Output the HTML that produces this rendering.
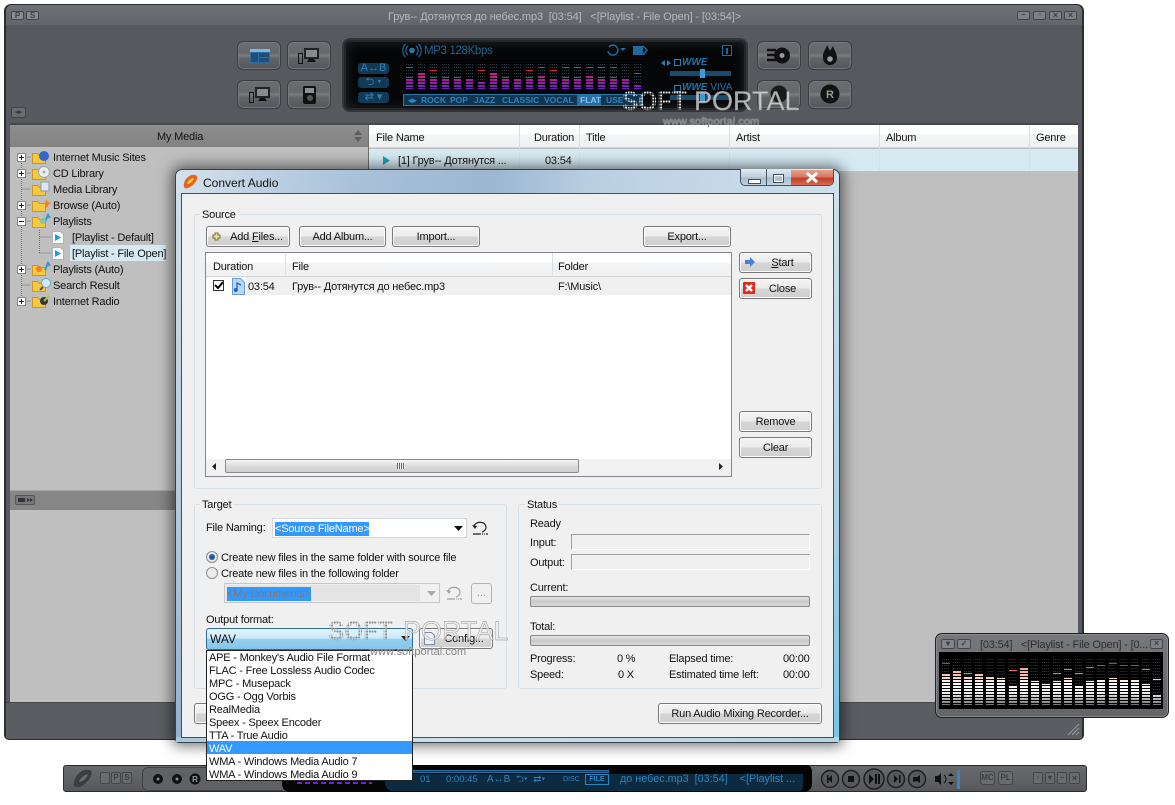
<!DOCTYPE html>
<html><head><meta charset="utf-8"><style>
html,body{margin:0;padding:0;background:#fff}
#r{position:relative;width:1175px;height:805px;overflow:hidden;background:#fff;font-family:"Liberation Sans",sans-serif;font-size:11px;color:#111}
#r div,#r svg{position:absolute}
.t{position:absolute;white-space:pre;line-height:14px;font-size:11px;letter-spacing:-.19px;margin-top:1px}
.n{margin-top:0;letter-spacing:0}
.b{position:absolute;box-sizing:border-box;border:1px solid #7a7a7a;border-radius:3px;background:linear-gradient(#f4f4f4 0,#ececec 48%,#d6d6d6 52%,#cfcfcf 100%);box-shadow:inset 0 0 0 1px #fbfbfb;text-align:center;line-height:20px;font-size:11px;letter-spacing:-.19px;white-space:pre}
.g{position:absolute;box-sizing:border-box;border:1px solid #d5dfe5;border-radius:3px}
.mb{position:absolute;box-sizing:border-box;border:1px solid #3c3d41;border-radius:6px;background:linear-gradient(#6c6d71 0,#67686c 40%,#7a7b7f 50%,#636468 60%,#55565a 100%);box-shadow:inset 0 0 0 1px #76777b}
.sm{position:absolute;box-sizing:border-box;border:1px solid #45464a;background:#808186;border-radius:2px;color:#3d3e42;font:bold 8px/8px "Liberation Sans",sans-serif;text-align:center}
.chip{position:absolute;background:#123a55;border-radius:3px;color:#2f7fb4;font-size:11px;line-height:11px;text-align:center}
.soft{position:absolute;font:bold 27px/32px "Liberation Sans",sans-serif;color:transparent;background-image:radial-gradient(circle,#e6e6e6 1px,transparent 1.300px);background-size:3px 3px;-webkit-background-clip:text;background-clip:text;transform:scaleX(.9);transform-origin:0 0}
.port{position:absolute;font:27px/32px "Liberation Sans",sans-serif;color:rgba(235,235,235,.72);-webkit-text-stroke:.4px #8a8a8a}
.url{position:absolute;font:11px/14px "Liberation Sans",sans-serif;color:rgba(115,115,115,.9);text-shadow:0 0 1px #fff;white-space:pre;letter-spacing:.05px}
.ps{left:0;color:#2f83bc;font:bold 8.500px/14px "Liberation Sans",sans-serif}
</style></head><body><div id="r">

<!-- MAIN WINDOW -->
<div style="left:4px;top:4px;width:1080px;height:736px;background:#58595e;border:1px solid #2d2e31;border-left-width:2px;border-right-width:2px;box-sizing:border-box;border-radius:7px 7px 5px 5px"></div>
<div style="left:6px;top:5px;width:1076px;height:20px;background:linear-gradient(#6f7176,#63656a);border-radius:6px 6px 0 0"></div>
<div class="sm" style="left:11px;top:11px;width:13px;height:9px;background:#8b8c90">P</div>
<div class="sm" style="left:26px;top:11px;width:13px;height:9px;background:#8b8c90">S</div>
<div class="t" style="left:388px;top:9px;color:#b6b8bc;letter-spacing:-.12px">Грув-- Дотянутся до небес.mp3  [03:54]   &lt;[Playlist - File Open] - [03:54]&gt;</div>
<div class="sm" style="left:1017px;top:11px;width:13px;height:9px;line-height:6px">–</div>
<div class="sm" style="left:1033px;top:11px;width:13px;height:9px;line-height:6px">▫</div>
<div class="sm" style="left:1049px;top:11px;width:13px;height:9px;font-size:9px;line-height:7px">×</div>
<div class="sm" style="left:1064px;top:11px;width:13px;height:9px;font-size:9px;line-height:7px">×</div>
<div class="sm" style="left:11px;top:107px;width:15px;height:11px;background:#6b6c70;font-size:7px;line-height:9px">◂▸</div>

<!-- main buttons -->
<div class="mb" style="left:237px;top:41px;width:44px;height:29px"></div>
<svg style="left:250px;top:49px" width="20" height="14"><rect width="20" height="14" fill="#2f6c9e"/><rect width="20" height="3" fill="#7fb6dd"/><rect x="1" y="4" width="7" height="9" fill="#1e4f78"/><rect x="9" y="4" width="10" height="4" fill="#1e4f78"/><rect x="9" y="9" width="10" height="4" fill="#1e4f78"/></svg>
<div class="mb" style="left:287px;top:41px;width:44px;height:29px"></div>
<svg style="left:298px;top:47px" width="22" height="17"><rect x="0.5" y="6.5" width="4" height="10" fill="none" stroke="#111"/><rect x="6" y="1" width="15" height="11" fill="#222"/><rect x="8" y="3" width="11" height="7" fill="#8a8b8f"/><path d="M11 12h5l2 3H9z" fill="#111"/></svg>
<div class="mb" style="left:237px;top:80px;width:44px;height:29px"></div>
<svg style="left:249px;top:86px" width="22" height="17"><rect x="0.5" y="6.5" width="4" height="10" fill="none" stroke="#111"/><rect x="6" y="1" width="15" height="11" fill="#222"/><rect x="8" y="3" width="11" height="7" fill="#8a8b8f"/><path d="M11 12h5l2 3H9z" fill="#111"/></svg>
<div class="mb" style="left:287px;top:80px;width:44px;height:29px"></div>
<svg style="left:303px;top:86px" width="13" height="18"><rect width="13" height="18" rx="2" fill="#111"/><rect x="2" y="2" width="9" height="5" fill="#8d8e92"/><circle cx="7" cy="12" r="3" fill="#555"/></svg>
<div class="mb" style="left:757px;top:41px;width:44px;height:29px"></div>
<svg style="left:767px;top:47px" width="24" height="17"><circle cx="15" cy="8.500" r="8" fill="#111"/><circle cx="15" cy="8.500" r="2.500" fill="#999"/><path d="M0 3h9M0 8h7M0 13h9" stroke="#111" stroke-width="2.500"/></svg>
<div class="mb" style="left:808px;top:41px;width:44px;height:29px"></div>
<svg style="left:821px;top:44px" width="18" height="23"><path d="M2 14C1 8 5 6 6 1c1 2 2 4 3 6 1-2 2-3 3-5 1 4 4 7 4 12a7 7 0 0 1-14 0z" fill="#111"/><circle cx="9" cy="15" r="2.800" fill="#999"/></svg>
<div class="mb" style="left:757px;top:80px;width:44px;height:29px"></div>
<svg style="left:769px;top:84px" width="20" height="20"><circle cx="10" cy="10" r="8.500" fill="#1a1a1a"/></svg>
<div class="mb" style="left:808px;top:80px;width:44px;height:29px"></div>
<svg style="left:820px;top:84px" width="20" height="20"><circle cx="10" cy="10" r="9.500" fill="#111"/><text x="10" y="14" text-anchor="middle" font-family="Liberation Sans" font-weight="bold" font-size="11" fill="#999">R</text></svg>

<!-- display -->
<div style="left:342px;top:38px;width:406px;height:74px;background:#050607;border:2px solid #333539;box-sizing:border-box;border-radius:8px;box-shadow:inset 0 0 0 2px #24262a,inset 0 0 10px 4px #1c1e22"></div>
<svg style="left:402px;top:43px" width="20" height="15"><circle cx="10" cy="7.500" r="2.800" fill="#2a76aa"/><path d="M6 3a6 6 0 0 0 0 9M14 3a6 6 0 0 1 0 9M3.500 1a9 9 0 0 0 0 13M16.500 1a9 9 0 0 1 0 13" stroke="#1f5f8c" stroke-width="1.300" fill="none"/></svg>
<div class="t n" style="left:424px;top:44px;color:#1f6491;font-size:11.500px;letter-spacing:-.35px">MP3 128Kbps</div>
<div class="chip" style="left:358px;top:63px;width:31px;height:11px">A↔B</div>
<div class="chip" style="left:358px;top:77px;width:31px;height:11px">⮌ ▾</div>
<div class="chip" style="left:358px;top:92px;width:31px;height:11px">⇄ ▾</div>

<svg style="left:404px;top:60px" width="240" height="32">
<defs>
<pattern id="d1" width="12" height="3" patternUnits="userSpaceOnUse"><rect x="2" width="1" height="2" fill="#30404a"/><rect x="4" width="1" height="2" fill="#30404a"/><rect x="6" width="1" height="2" fill="#30404a"/><rect x="8" width="1" height="2" fill="#30404a"/></pattern>
<pattern id="s1" width="3" height="3" patternUnits="userSpaceOnUse" patternTransform="translate(0 1)"><rect width="3" height="2" fill="none"/><rect y="2" width="3" height="1" fill="#000"/></pattern>
<linearGradient id="m1" x1="0" y1="12" x2="0" y2="29" gradientUnits="userSpaceOnUse"><stop offset="0" stop-color="#d0207a"/><stop offset=".5" stop-color="#a020a0"/><stop offset="1" stop-color="#6a20c0"/></linearGradient>
</defs>
<rect x="0" y="3" width="240" height="26" fill="url(#d1)"/>
<g fill="url(#m1)">
<rect x="2" y="17" width="7" height="12"/><rect x="14" y="13" width="7" height="16"/><rect x="26" y="17" width="7" height="12"/><rect x="38" y="17" width="7" height="12"/><rect x="50" y="17" width="7" height="12"/><rect x="62" y="19" width="7" height="10"/><rect x="74" y="21" width="7" height="8"/><rect x="86" y="13" width="7" height="16"/><rect x="98" y="17" width="7" height="12"/><rect x="110" y="19" width="7" height="10"/><rect x="122" y="17" width="7" height="12"/><rect x="134" y="16" width="7" height="13"/><rect x="146" y="19" width="7" height="10"/><rect x="158" y="17" width="7" height="12"/><rect x="170" y="17" width="7" height="12"/><rect x="182" y="16" width="7" height="13"/><rect x="194" y="17" width="7" height="12"/><rect x="206" y="17" width="7" height="12"/><rect x="218" y="19" width="7" height="10"/><rect x="230" y="25" width="7" height="4"/>
</g>
<rect width="240" height="32" fill="url(#s1)"/>
<g fill="#d8263c">
<rect x="2" y="7" width="7" height="1"/><rect x="26" y="10" width="7" height="1"/><rect x="74" y="10" width="7" height="1"/><rect x="122" y="10" width="7" height="1"/><rect x="134" y="7" width="7" height="1"/><rect x="146" y="10" width="7" height="1"/><rect x="158" y="7" width="7" height="1"/><rect x="170" y="7" width="7" height="1"/><rect x="182" y="7" width="7" height="1"/><rect x="206" y="7" width="7" height="1"/><rect x="230" y="13" width="7" height="1"/><rect x="194" y="7" width="7" height="1"/>
</g>
</svg>

<div style="left:403px;top:94px;width:240px;height:12px;box-sizing:border-box;border:1px solid #2a79ab;background:#0f3550"></div>
<div class="t n ps" style="left:408px;top:93px">◂▸</div>
<div class="t n ps" style="left:421px;top:93px">ROCK</div>
<div class="t n ps" style="left:450px;top:93px">POP</div>
<div class="t n ps" style="left:474px;top:93px">JAZZ</div>
<div class="t n ps" style="left:502px;top:93px">CLASSIC</div>
<div class="t n ps" style="left:544px;top:93px">VOCAL</div>
<div style="left:577px;top:95px;width:24px;height:10px;background:#2a6f9f"></div>
<div class="t n ps" style="left:580px;top:93px;color:#7fc3ee">FLAT</div>
<div class="t n ps" style="left:606px;top:93px">USE</div>

<svg style="left:605px;top:43px" width="130" height="60" fill="none">
<path d="M4 4a5 5 0 1 1-1 4" stroke="#1f6a9c" stroke-width="1.500"/><path d="M15 5h6l-3 3z" fill="#1f6a9c"/>
<rect x="28" y="3" width="10" height="9" fill="#1f6a9c"/><path d="M38 3l4 4-4 5" stroke="#1f6a9c" stroke-width="1.500"/>
<rect x="117.500" y="2.500" width="9" height="10" stroke="#1f6a9c"/><rect x="121" y="5" width="2" height="6" fill="#1f6a9c"/>
<path d="M60 17l-4 3 4 3zM62 17l4 3-4 3z" fill="#2a7db5"/><rect x="69.500" y="16.500" width="6" height="6" stroke="#2a7db5"/>
<rect x="65" y="28" width="61" height="5" fill="#1a4a6c"/><rect x="95" y="26" width="5" height="9" fill="#3f9ad6"/>
<rect x="69.500" y="42.500" width="6" height="6" stroke="#2a7db5"/>
<rect x="65" y="52" width="61" height="5" fill="#1a4a6c"/><rect x="95" y="50" width="5" height="9" fill="#3f9ad6"/>
</svg>
<div class="t n" style="left:682px;top:56px;color:#2272a8;font:italic bold 10px/14px 'Liberation Sans',sans-serif">WWE</div>
<div class="t n" style="left:682px;top:81px;color:#2272a8;font:italic bold 10px/14px 'Liberation Sans',sans-serif">WWE<span style="font-weight:normal;font-style:normal"> VIVA</span></div>

<!-- left pane -->
<div style="left:10px;top:123px;width:1068px;height:2px;background:#46474a"></div>
<div style="left:10px;top:125px;width:358px;height:22px;background:linear-gradient(#8e8e8e,#828282)"></div>
<div class="t" style="left:157px;top:129px;color:#141414">My Media</div>
<svg style="left:353px;top:129px" width="10" height="14"><path d="M5 1l4 5H1zM5 13l4-5H1z" fill="#5d5d5d"/></svg>
<div style="left:10px;top:147px;width:358px;height:343px;background:#bfbfbf"></div>
<div style="left:10px;top:490px;width:358px;height:20px;background:#868686;border-top:1px solid #a8a8a8;box-sizing:border-box"></div>
<svg style="left:15px;top:495px" width="20" height="10"><rect x=".5" y=".5" width="19" height="9" rx="1" fill="#77787c" stroke="#555"/><rect x="3" y="3" width="7" height="4" fill="#333"/><path d="M12 3l3 2-3 2zM15 3l3 2-3 2z" fill="#333"/></svg>
<div style="left:10px;top:510px;width:358px;height:192px;background:#bfbfbf"></div>
<div style="left:368px;top:125px;width:1px;height:577px;background:#6f6f6f"></div>

<!-- tree -->
<svg style="left:14px;top:150px" width="60" height="160" fill="none">
<path d="M7.500 7V151M7.500 7h10M7.500 23h10M7.500 39h10M7.500 55h10M7.500 71h10M7.500 119h10M7.500 135h10M7.500 151h10M25.500 80V103M25.500 87h12M25.500 103h12" stroke="#6f6f6f" stroke-dasharray="1 1"/>
<g fill="#fff" stroke="#7a8a9c"><rect x="3.500" y="3.500" width="8" height="8"/><rect x="3.500" y="19.500" width="8" height="8"/><rect x="3.500" y="51.500" width="8" height="8"/><rect x="3.500" y="67.500" width="8" height="8"/><rect x="3.500" y="115.500" width="8" height="8"/><rect x="3.500" y="147.500" width="8" height="8"/></g>
<path d="M5 7.500h5M7.500 5v5M5 23.500h5M7.500 21v5M5 55.500h5M7.500 53v5M5 71.500h5M5 119.500h5M7.500 117v5M5 151.500h5M7.500 149v5" stroke="#223"/>
<g fill="#f5c93e" stroke="#c8962a"><path d="M18.500 3.500h5l2 2h6v8h-13z"/><path d="M18.500 19.500h5l2 2h6v8h-13z"/><path d="M18.500 35.500h5l2 2h6v8h-13z"/><path d="M18.500 51.500h5l2 2h6v8h-13z"/><path d="M18.500 67.500h5l2 2h6v8h-13z"/><path d="M18.500 115.500h5l2 2h6v8h-13z"/><path d="M18.500 131.500h5l2 2h6v8h-13z"/><path d="M18.500 147.500h5l2 2h6v8h-13z"/></g>
<circle cx="30" cy="6" r="5" fill="#2f68c8"/><circle cx="30" cy="22" r="5.500" fill="#e8eef4" stroke="#9aa"/><circle cx="30" cy="22" r="1.500" fill="#aab"/>
<rect x="27" y="32" width="8" height="9" fill="#dbe4ef" stroke="#8a9ab0"/><path d="M32 49l2 3 3 1-3 2-1 3-2-3z" fill="#f08020"/>
<path d="M31 72l3-7 2 3" stroke="#2a9ad8" stroke-width="2"/><circle cx="29" cy="71" r="3" fill="#8ac0a0"/><path d="M31 120l3-7 2 3" stroke="#2a9ad8" stroke-width="2"/><circle cx="25" cy="119" r="3" fill="#f08020"/>
<circle cx="32" cy="133" r="4.500" fill="#cfe8f5" stroke="#6ab"/><path d="M29 137l-3 3" stroke="#555" stroke-width="2"/>
<circle cx="30" cy="151" r="4" fill="#334"/><path d="M30 151l5-5" stroke="#b4c020" stroke-width="2"/>
<g><path d="M38.500 81.500h8l3 3v9h-11z" fill="#fff" stroke="#9fb5cf"/><path d="M41 84l6 3.500-6 3.500z" fill="#1c9be0"/><path d="M38.500 97.500h8l3 3v9h-11z" fill="#fff" stroke="#9fb5cf"/><path d="M41 100l6 3.500-6 3.500z" fill="#1c9be0"/></g>
</svg>
<div style="left:70px;top:245px;width:96px;height:16px;background:#d6eaf3"></div>
<div class="t" style="left:53px;top:150px">Internet Music Sites</div>
<div class="t" style="left:53px;top:166px">CD Library</div>
<div class="t" style="left:53px;top:182px">Media Library</div>
<div class="t" style="left:53px;top:198px">Browse (Auto)</div>
<div class="t" style="left:53px;top:214px">Playlists</div>
<div class="t" style="left:72px;top:230px">[Playlist - Default]</div>
<div class="t" style="left:72px;top:246px">[Playlist - File Open]</div>
<div class="t" style="left:53px;top:262px">Playlists (Auto)</div>
<div class="t" style="left:53px;top:278px">Search Result</div>
<div class="t" style="left:53px;top:294px">Internet Radio</div>

<!-- right pane -->
<div style="left:369px;top:125px;width:709px;height:577px;background:#bfbfbf"></div>
<div style="left:369px;top:125px;width:709px;height:23px;background:linear-gradient(#fff 0,#fff 40%,#f2f4f5 45%,#eff1f2 100%);border-bottom:1px solid #d5d5d5;box-sizing:border-box"></div>
<div style="left:369px;top:149px;width:709px;height:22px;background:#d6eaf3"></div>
<div style="left:519px;top:125px;width:1px;height:46px;background:#dcdfe1"></div><div style="left:579px;top:125px;width:1px;height:46px;background:#dcdfe1"></div><div style="left:729px;top:125px;width:1px;height:46px;background:#dcdfe1"></div><div style="left:879px;top:125px;width:1px;height:46px;background:#dcdfe1"></div><div style="left:1029px;top:125px;width:1px;height:46px;background:#dcdfe1"></div>
<div class="t" style="left:376px;top:130px">File Name</div><div class="t" style="left:534px;top:130px">Duration</div><div class="t" style="left:586px;top:130px">Title</div><div class="t" style="left:736px;top:130px">Artist</div><div class="t" style="left:886px;top:130px">Album</div><div class="t" style="left:1036px;top:130px">Genre</div>
<svg style="left:382px;top:155px" width="9" height="11"><path d="M1 1l7 4.500-7 4.500z" fill="#26a0b8"/></svg>
<div class="t" style="left:398px;top:153px">[1] Грув-- Дотянутся ...</div>
<div class="t" style="left:545px;top:153px">03:54</div>

<div style="left:6px;top:702px;width:1076px;height:36px;background:#5c5d62;border-top:1px solid #48494c;box-sizing:border-box"></div>
<svg style="left:1066px;top:722px" width="14" height="14"><path d="M13 2L2 13M13 6l-7 7M13 10l-3 3" stroke="#9a9a9a"/></svg>

<!-- DIALOG -->
<div style="left:175px;top:169px;width:665px;height:574px;border-radius:7px 7px 4px 4px;box-sizing:border-box;border:1px solid #34424e;box-shadow:0 0 14px 3px rgba(0,0,0,.55);background:linear-gradient(100deg,#d5e2ec 0,#bcd0e2 12%,#a8c0d8 25%,#9cb7d2 42%,#bad0e2 55%,#cadcea 80%,#d9e8f1 100%)"></div>
<div style="left:176px;top:193px;width:5px;height:548px;background:linear-gradient(#cfdeea,#b6cbdc 55%,#8fb2cf 100%)"></div>
<div style="left:833px;top:193px;width:6px;height:548px;background:linear-gradient(#cde1ee,#a9cfe6 60%,#76c5e6 100%)"></div>
<div style="left:176px;top:737px;width:663px;height:5px;background:linear-gradient(90deg,#a8c8dc,#cfdfe9 40%,#b6d4e4 100%)"></div>
<div style="left:181px;top:193px;width:653px;height:545px;background:#f0f0f0;border:1px solid #3f5060;box-sizing:border-box"></div>
<svg style="left:182px;top:173px" width="17" height="17"><path d="M2 14C1 9 5 3 10 2c4-1 6 1 5 4-1 4-6 8-9 9-2 .5-3.500.5-4-1z" fill="#e8631c"/><path d="M5 11c1-3 4-6 7-6-1 3-4 6-7 6z" fill="#ffd04a"/></svg>
<div class="t n" style="left:203px;top:176px;font-size:12px;color:#111">Convert Audio</div>
<div style="left:740px;top:169px;width:94px;height:17px;box-sizing:border-box;border:1px solid #46535f;border-top:none;border-radius:0 0 5px 5px;overflow:hidden;background:linear-gradient(#e2ebf2,#bfcfdc 50%,#a8bccb 55%,#c4d4df)"></div>
<div style="left:766px;top:169px;width:1px;height:16px;background:#4d5a66"></div>
<div style="left:791px;top:170px;width:42px;height:15px;background:linear-gradient(#e6a08e,#d87a66 45%,#c43e26 55%,#d46a52);border-radius:0 0 4px 0"></div>
<div style="left:748px;top:179px;width:11px;height:3px;background:#fff;border:1px solid #44505c"></div>
<div style="left:773px;top:174px;width:9px;height:7px;border:1px solid #44505c;box-shadow:inset 0 0 0 1px #fff"></div>
<svg style="left:805px;top:171px" width="14" height="13"><path d="M2 2l10 9M12 2L2 11" stroke="#fff" stroke-width="3"/></svg>

<!-- source group -->
<div class="g" style="left:194px;top:214px;width:628px;height:275px"></div>
<div class="t" style="left:200px;top:207px;background:#f0f0f0;padding:0 2px">Source</div>
<div class="b" style="left:206px;top:226px;width:84px;height:21px;padding-left:17px">Add <u>F</u>iles...</div>
<svg style="left:212px;top:232px" width="9" height="9"><path d="M3 1h3v2h2v3H6v2H3V6H1V3h2z" fill="#e9e2a0" stroke="#7a7030"/></svg>
<div class="b" style="left:299px;top:226px;width:87px;height:21px">Add Album...</div>
<div class="b" style="left:392px;top:226px;width:88px;height:21px">Import...</div>
<div class="b" style="left:643px;top:226px;width:88px;height:21px">Export...</div>
<div class="b" style="left:739px;top:252px;width:73px;height:21px;padding-left:14px"><u>S</u>tart</div>
<svg style="left:744px;top:257px" width="12" height="10"><path d="M1 3h5V0l5 5-5 5V7H1z" fill="#4c7fd8"/></svg>
<div class="b" style="left:739px;top:278px;width:73px;height:21px;padding-left:14px">Close</div>
<svg style="left:743px;top:282px" width="12" height="12"><rect width="12" height="12" rx="1" fill="#dc2a1c"/><path d="M3 3l6 6M9 3L3 9" stroke="#fff" stroke-width="2.500"/></svg>
<div class="b" style="left:739px;top:411px;width:73px;height:21px">Remove</div>
<div class="b" style="left:739px;top:437px;width:73px;height:21px">Clear</div>

<!-- list -->
<div style="left:205px;top:252px;width:527px;height:225px;background:#fff;border:1px solid #828790;box-sizing:border-box"></div>
<div style="left:206px;top:253px;width:525px;height:24px;background:linear-gradient(#fff 0,#fff 40%,#f3f4f5 45%,#f0f1f2 100%);border-bottom:1px solid #d5d5d5;box-sizing:border-box"></div>
<div style="left:285px;top:253px;width:1px;height:24px;background:#dcdfe1"></div><div style="left:552px;top:253px;width:1px;height:24px;background:#dcdfe1"></div>
<div class="t" style="left:213px;top:259px">Duration</div><div class="t" style="left:292px;top:259px">File</div><div class="t" style="left:558px;top:259px">Folder</div>
<div style="left:246px;top:277px;width:485px;height:18px;background:#f0f0f0"></div>
<div style="left:213px;top:280px;width:11px;height:11px;background:#fff;border:1px solid #333;box-sizing:border-box"></div>
<svg style="left:214px;top:281px" width="10" height="9"><path d="M1 4l3 3 5-6" stroke="#000" stroke-width="2" fill="none"/></svg>
<svg style="left:232px;top:278px" width="13" height="17"><path d="M.5.5h8l4 4v12H.5z" fill="#b9d8f5" stroke="#6a9ad8"/><path d="M5 12V5l4 2" stroke="#2a5cc0" fill="none" stroke-width="1.300"/><circle cx="3.800" cy="12" r="2" fill="#2a5cc0"/></svg>
<div class="t" style="left:248px;top:279px">03:54</div>
<div class="t" style="left:292px;top:279px">Грув-- Дотянутся до небес.mp3</div>
<div class="t" style="left:558px;top:279px">F:\Music\</div>
<div style="left:206px;top:459px;width:525px;height:17px;background:#f1f1f1"></div>
<div style="left:225px;top:459px;width:354px;height:14px;background:linear-gradient(#f6f6f6,#dcdcdc 50%,#cfcfcf);border:1px solid #8b8b8b;border-radius:2px;box-sizing:border-box"></div>
<div style="left:397px;top:463px;width:8px;height:6px;background:repeating-linear-gradient(90deg,#666 0 1px,#eee 1px 2px)"></div>
<svg style="left:212px;top:462px" width="6" height="9"><path d="M4 1L0 4.500 4 8z" fill="#222"/></svg>
<svg style="left:719px;top:462px" width="6" height="9"><path d="M0 1l4 3.500L0 8z" fill="#222"/></svg>

<!-- target -->
<div class="g" style="left:194px;top:504px;width:313px;height:185px"></div>
<div class="t" style="left:200px;top:497px;background:#f0f0f0;padding:0 2px">Target</div>
<div class="t" style="left:206px;top:520px">File Naming:</div>
<div style="left:272px;top:518px;width:195px;height:20px;background:#fff;border:1px solid #d0d7dc;box-sizing:border-box"></div>
<div class="t" style="left:275px;top:521px;background:#3399ff;color:#fff;width:94px">&lt;Source FileName&gt;</div>
<svg style="left:454px;top:526px" width="9" height="5"><path d="M0 0h9L4.500 5z" fill="#111"/></svg>
<svg style="left:472px;top:520px" width="17" height="16" fill="none"><path d="M2 7a6 5 0 1 1 11 3c-1 1-2 2-3 2" stroke="#222" stroke-width="1.200"/><path d="M0 5l3 4 2-3z" fill="#222"/><path d="M1 14h15" stroke="#222" stroke-width="1.300" stroke-dasharray="8 1 1 1 1 1"/></svg>
<svg style="left:205px;top:550px" width="14" height="30"><circle cx="7" cy="7" r="5.500" fill="#e8e8e8" stroke="#8a8f94"/><circle cx="7" cy="7" r="3" fill="#1a5fa8"/><circle cx="7" cy="23" r="5.500" fill="#ededed" stroke="#8a8f94"/></svg>
<div class="t" style="left:221px;top:550px">Create new files in the same folder with source file</div>
<div class="t" style="left:221px;top:566px">Create new files in the following folder</div>
<div style="left:224px;top:583px;width:216px;height:20px;background:#f0f0f0;border:1px solid #c2c8cc;box-sizing:border-box"></div>
<div style="left:226px;top:585px;width:194px;height:16px;background:#e4e4e4"></div>
<div class="t" style="left:227px;top:586px;background:#3399ff;color:#7a7a7a;width:84px">&lt;My Documents&gt;</div>
<svg style="left:427px;top:591px" width="9" height="5"><path d="M0 0h9L4.500 5z" fill="#a8a8a8"/></svg>
<svg style="left:446px;top:585px" width="17" height="16" fill="none"><path d="M2 7a6 5 0 1 1 11 3c-1 1-2 2-3 2" stroke="#a0a0a0" stroke-width="1.200"/><path d="M0 5l3 4 2-3z" fill="#a0a0a0"/><path d="M1 14h15" stroke="#a0a0a0" stroke-width="1.300" stroke-dasharray="8 1 1 1 1 1"/></svg>
<div style="left:471px;top:583px;width:21px;height:21px;border:1px solid #b4b4b4;border-radius:3px;box-sizing:border-box;color:#999;text-align:center;font-size:11px;line-height:19px">...</div>
<div class="t" style="left:206px;top:612px">Output format:</div>
<div style="left:206px;top:628px;width:207px;height:22px;box-sizing:border-box;border:1px solid #2f6f97;border-radius:3px;background:linear-gradient(#e2f3fc 0,#cfeafa 45%,#93cfee 52%,#84c6e8 100%)"></div>
<div class="t n" style="left:210px;top:632px;font-size:12px">WAV</div>
<svg style="left:401px;top:636px" width="9" height="5"><path d="M0 0h9L4.500 5z" fill="#222"/></svg>
<div class="b" style="left:419px;top:628px;width:74px;height:21px;padding-left:16px">Config...</div>
<svg style="left:424px;top:632px" width="11" height="13"><path d="M.5.5h7l3 3v9H.5z" fill="#eef2fa" stroke="#7a8aa8"/></svg>
<div class="b" style="left:194px;top:703px;width:60px;height:21px"></div>

<!-- status -->
<div class="g" style="left:518px;top:504px;width:304px;height:185px"></div>
<div class="t" style="left:525px;top:497px;background:#f0f0f0;padding:0 2px">Status</div>
<div class="t" style="left:530px;top:516px">Ready</div>
<div class="t" style="left:530px;top:535px">Input:</div>
<div class="t" style="left:530px;top:555px">Output:</div>
<div style="left:571px;top:534px;width:239px;height:16px;box-sizing:border-box;border:1px solid #fff;border-top-color:#a0a0a0;border-left-color:#a0a0a0"></div>
<div style="left:571px;top:554px;width:239px;height:16px;box-sizing:border-box;border:1px solid #fff;border-top-color:#a0a0a0;border-left-color:#a0a0a0"></div>
<div class="t" style="left:530px;top:580px">Current:</div>
<div style="left:530px;top:596px;width:280px;height:11px;box-sizing:border-box;border:1px solid #888;border-radius:2px;background:linear-gradient(#e6e6e6,#c8c8c8 50%,#d8d8d8)"></div>
<div class="t" style="left:530px;top:619px">Total:</div>
<div style="left:530px;top:635px;width:280px;height:11px;box-sizing:border-box;border:1px solid #888;border-radius:2px;background:linear-gradient(#e6e6e6,#c8c8c8 50%,#d8d8d8)"></div>
<div class="t" style="left:530px;top:651px">Progress:</div><div class="t" style="left:617px;top:651px">0 %</div><div class="t" style="left:669px;top:651px">Elapsed time:</div><div class="t" style="left:783px;top:651px">00:00</div>
<div class="t" style="left:530px;top:667px">Speed:</div><div class="t" style="left:618px;top:667px">0 X</div><div class="t" style="left:669px;top:667px">Estimated time left:</div><div class="t" style="left:783px;top:667px">00:00</div>
<div class="b" style="left:658px;top:703px;width:164px;height:21px">Run Audio Mixing Recorder...</div>

<!-- MINI WINDOW -->
<div style="left:935px;top:633px;width:234px;height:85px;box-sizing:border-box;background:linear-gradient(#77787c,#636468);border:1px solid #1f2022;border-radius:7px;box-shadow:inset 0 0 0 1px #8a8b8f"></div>
<div class="sm" style="left:941px;top:639px;width:14px;height:10px;background:#84858a;font-size:8px;line-height:7px">▾</div>
<div class="sm" style="left:957px;top:639px;width:14px;height:10px;background:#84858a;font-size:8px;line-height:7px">✓</div>
<div class="t" style="left:980px;top:637px;color:#2d2e30">[03:54]   &lt;[Playlist - File Open] - [0...</div>
<div class="sm" style="left:1150px;top:639px;width:13px;height:10px;font-size:9px;line-height:7px">×</div>
<svg style="left:939px;top:652px" width="224" height="57">
<defs>
<pattern id="d2" width="11.100" height="3" patternUnits="userSpaceOnUse" patternTransform="translate(3 0)"><rect x="0" width="1" height="2" fill="#3a3a3a"/><rect x="2" width="1" height="2" fill="#3a3a3a"/><rect x="4" width="1" height="2" fill="#3a3a3a"/><rect x="6" width="1" height="2" fill="#3a3a3a"/></pattern>
<pattern id="s2" width="3" height="3" patternUnits="userSpaceOnUse" patternTransform="translate(0 1)"><rect y="2" width="3" height="1" fill="#000"/></pattern>
<linearGradient id="m2" x1="0" y1="10" x2="0" y2="53" gradientUnits="userSpaceOnUse"><stop offset="0" stop-color="#f08a80"/><stop offset=".35" stop-color="#f6c8c0"/><stop offset=".5" stop-color="#ffffff"/><stop offset=".72" stop-color="#f4f4f4"/><stop offset="1" stop-color="#6f6f6f"/></linearGradient>
</defs>
<rect width="224" height="57" fill="#000"/>
<rect x="0" y="5" width="224" height="48" fill="url(#d2)"/>
<g fill="url(#m2)">
<rect x="3" y="22" width="8" height="31"/><rect x="14" y="18" width="8" height="35"/><rect x="25" y="25" width="8" height="28"/><rect x="36" y="22" width="8" height="31"/><rect x="47" y="24" width="8" height="29"/><rect x="58" y="26" width="8" height="27"/><rect x="70" y="34" width="8" height="19"/><rect x="81" y="16" width="8" height="37"/><rect x="92" y="29" width="8" height="24"/><rect x="103" y="32" width="8" height="21"/><rect x="114" y="29" width="8" height="24"/><rect x="125" y="26" width="8" height="27"/><rect x="136" y="34" width="8" height="19"/><rect x="147" y="29" width="8" height="24"/><rect x="158" y="27" width="8" height="26"/><rect x="170" y="26" width="8" height="27"/><rect x="181" y="27" width="8" height="26"/><rect x="192" y="27" width="8" height="26"/><rect x="203" y="32" width="8" height="21"/><rect x="214" y="43" width="8" height="10"/>
</g>
<rect width="224" height="57" fill="url(#s2)"/>
<g>
<rect x="3" y="11" width="8" height="1" fill="#d83030"/><rect x="25" y="21" width="8" height="1" fill="#ee7060"/><rect x="70" y="18" width="8" height="1" fill="#ee7060"/><rect x="114" y="21" width="8" height="1" fill="#ee7060"/><rect x="125" y="17" width="8" height="1" fill="#ee7060"/><rect x="136" y="21" width="8" height="1" fill="#ee7060"/><rect x="147" y="15" width="8" height="1" fill="#e85050"/><rect x="158" y="13" width="8" height="1" fill="#e04040"/><rect x="170" y="11" width="8" height="1" fill="#d83030"/><rect x="181" y="13" width="8" height="1" fill="#d83030"/><rect x="192" y="13" width="8" height="1" fill="#d83030"/><rect x="203" y="17" width="8" height="1" fill="#ee7060"/><rect x="214" y="27" width="8" height="1" fill="#f6c8c0"/>
</g>
</svg>

<!-- BOTTOM BAR -->
<div style="left:63px;top:765px;width:1024px;height:27px;box-sizing:border-box;background:linear-gradient(#6a6b6f,#57585c);border:1px solid #2a2b2e;border-radius:3px"></div>
<svg style="left:72px;top:768px" width="22" height="21"><path d="M2 18C1 12 6 3 13 2c6-1 8 2 6 6-2 5-8 10-12 11-3 .5-4.500 0-5-1z" fill="#3c3d41"/><path d="M7 14c1-4 5-7 9-8-1 4-5 8-9 8z" fill="#6a6b6f"/></svg>
<div class="sm" style="left:100px;top:772px;width:10px;height:12px;background:#6a6b6f"></div>
<div class="sm" style="left:111px;top:772px;width:10px;height:12px;background:#6a6b6f;line-height:10px">P</div>
<div class="sm" style="left:122px;top:772px;width:10px;height:12px;background:#6a6b6f;line-height:10px">S</div>
<div style="left:142px;top:767px;width:145px;height:24px;background:#606165;border:1px solid #404145;border-radius:6px;box-sizing:border-box"></div>
<svg style="left:152px;top:772px" width="60" height="14"><circle cx="6" cy="7" r="5" fill="#111"/><circle cx="6" cy="7" r="1.500" fill="#888"/><circle cx="25" cy="7" r="5" fill="#111"/><circle cx="25" cy="7" r="1.500" fill="#888"/><circle cx="43" cy="7" r="5.500" fill="#111"/><text x="43" y="10" text-anchor="middle" font-family="Liberation Sans" font-weight="bold" font-size="8" fill="#999">R</text></svg>
<div style="left:282px;top:765px;width:530px;height:27px;background:#050505;border-radius:6px 6px 8px 8px"></div>
<div style="left:385px;top:774px;width:418px;height:17px;background:#0c2b40;border-radius:6px 0 4px 8px"></div>
<div style="left:413px;top:770px;width:196px;height:3px;background:#123b58;border:1px solid #2a6d9c;box-sizing:border-box"></div>
<div style="left:297px;top:782px;width:75px;height:2px;background:repeating-linear-gradient(90deg,#7b20d8 0 5px,transparent 5px 8px)"></div>
<div class="t n" style="left:420px;top:773px;color:#2c85bf;font-size:9.500px">01</div>
<div class="t n" style="left:446px;top:773px;color:#2c85bf;font-size:9.500px">0:00:45</div>
<div class="t n" style="left:487px;top:773px;color:#2c85bf;font-size:10px">A↔B  ⮌▾  ⇄▾</div>
<div class="t n" style="left:563px;top:773px;color:#2c85bf;font-size:7px">DISC</div>
<div style="left:585px;top:774px;width:24px;height:11px;border:1px solid #2c85bf;box-sizing:border-box;color:#2c85bf;font:bold 7px/9px 'Liberation Sans',sans-serif;text-align:center">FILE</div>
<div class="t n" style="left:620px;top:772px;color:#2c85bf;font-size:10.800px">до небес.mp3  [03:54]    &lt;[Playlist ...</div>
<svg style="left:818px;top:767px" width="160" height="24">
<g fill="#57585c" stroke="#1e1f22" stroke-width="1.500"><circle cx="12" cy="12" r="8.500"/><circle cx="33" cy="12" r="8.500"/><circle cx="56" cy="12" r="10"/><circle cx="78" cy="12" r="8.500"/><circle cx="99" cy="12" r="8.500"/></g>
<g fill="#111"><path d="M14 8v8l-4-4zM9 8h1.500v8H9z"/><rect x="30" y="9" width="6" height="6"/><path d="M51 7v10l5-5zM57 7h2v10h-2zM60 7h2v10h-2z"/><path d="M76 8v8l4-4zM81 8h1.500v8H81z"/><path d="M95 15v-5h4l3-2v8l-3-2z"/></g>
<path d="M117 9h3l3-3v12l-3-3h-3z" fill="#111"/><path d="M126 8a5 5 0 0 1 0 8" stroke="#111" fill="none"/><path d="M130 9l3-3 3 3zM130 15l3 3 3-3z" fill="#111"/>
<rect x="139" y="3" width="3" height="19" fill="#3a86ba"/>
</svg>
<div class="sm" style="left:980px;top:771px;width:15px;height:14px;background:#6a6b6f;line-height:12px;border-radius:3px">MC</div>
<div class="sm" style="left:998px;top:771px;width:15px;height:14px;background:#6a6b6f;line-height:12px;border-radius:3px">PL</div>
<div class="sm" style="left:1033px;top:772px;width:10px;height:12px;background:#6a6b6f;line-height:9px">▫</div>
<div class="sm" style="left:1045px;top:772px;width:10px;height:12px;background:#6a6b6f;line-height:9px">▾</div>
<div class="sm" style="left:1057px;top:772px;width:10px;height:12px;background:#6a6b6f;line-height:9px">–</div>
<div class="sm" style="left:1069px;top:772px;width:11px;height:12px;background:#6a6b6f;line-height:10px;font-size:9px">×</div>

<!-- DROPDOWN -->
<div style="left:206px;top:650px;width:207px;height:131px;background:#fff;border:1px solid #222;box-sizing:border-box"></div>
<div style="left:207px;top:741px;width:205px;height:13px;background:#3399ff"></div>
<div class="t" style="left:209px;top:650px">APE - Monkey's Audio File Format</div>
<div class="t" style="left:209px;top:663px">FLAC - Free Lossless Audio Codec</div>
<div class="t" style="left:209px;top:676px">MPC - Musepack</div>
<div class="t" style="left:209px;top:689px">OGG - Ogg Vorbis</div>
<div class="t" style="left:209px;top:702px">RealMedia</div>
<div class="t" style="left:209px;top:715px">Speex - Speex Encoder</div>
<div class="t" style="left:209px;top:728px">TTA - True Audio</div>
<div class="t" style="left:209px;top:741px;color:#fff">WAV</div>
<div class="t" style="left:209px;top:754px">WMA - Windows Media Audio 7</div>
<div class="t" style="left:209px;top:767px">WMA - Windows Media Audio 9</div>

<!-- WATERMARKS -->
<div class="soft" style="left:622px;top:85px">SOFT</div>
<div class="port" style="left:694px;top:85px">PORTAL</div>
<div class="url" style="left:663px;top:115px">www.softportal.com</div>
<div class="soft" style="left:328px;top:615px;background-image:radial-gradient(circle,#8a8a8a 1px,transparent 1.300px)">SOFT</div>
<div class="port" style="left:403px;top:615px">PORTAL</div>
<div class="url" style="left:370px;top:645px">www.softportal.com</div>
</div></body></html>
